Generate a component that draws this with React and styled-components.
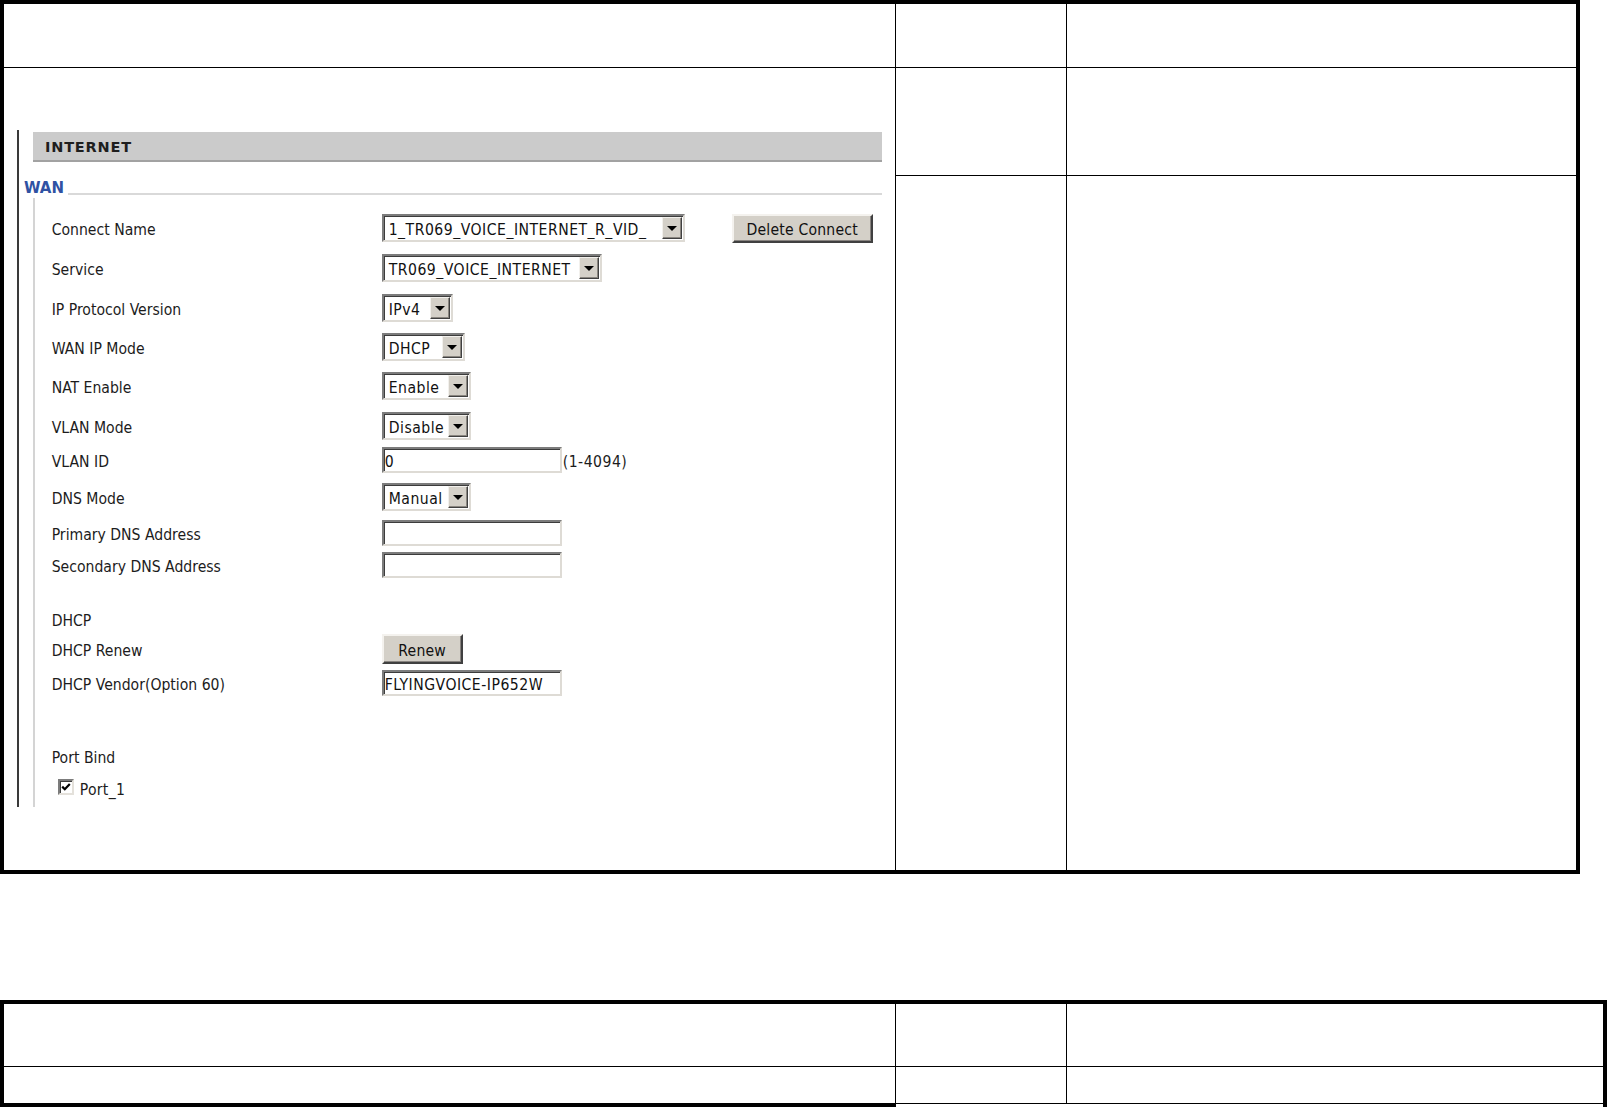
import React from "react";
import styled, { createGlobalStyle } from "styled-components";

const Global = createGlobalStyle`
  html, body {
    margin: 0;
    padding: 0;
    background: #ffffff;
  }
  body {
    font-family: "DejaVu Sans Condensed", "DejaVu Sans", sans-serif;
    font-stretch: condensed;
  }
`;

const Page = styled.div`
  width: 1608px;
  display: flex;
  flex-direction: column;
`;

const DocTable = styled.div`
  display: grid;
  width: ${p => p.$width}px;
  grid-template-columns: 892px 171px 1fr;
  grid-template-rows: ${p => p.$rows};
  border: 4px solid #000;
  border-bottom-width: ${p => (p.$openBottom ? 0 : 4)}px;
  margin-top: ${p => p.$top || 0}px;
  box-sizing: border-box;
`;

const Cell = styled.div`
  box-sizing: border-box;
  border-right: ${p => (p.$last ? 0 : 1)}px solid #000;
  border-bottom: ${p => p.$bottom || 0}px solid #000;
  grid-row: span ${p => p.$span || 1};
  ${p => (p.$height ? `height: ${p.$height}px; align-self: start;` : "")}
`;

/* ---- embedded router page ---- */

const Shot = styled.div`
  margin: 62px 0 0 13px;
  width: 865px;
  height: 677px;
  box-sizing: border-box;
  border-left: 2px solid #3a3a3a;
  display: flex;
  flex-direction: column;
`;

const TitleBar = styled.div`
  margin: 2px 0 0 14px;
  height: 30px;
  box-sizing: border-box;
  background: #cbcbcb;
  border-bottom: 2px solid #a2a2a2;
  padding: 2px 0 0 12px;
  display: flex;
  align-items: center;
  font-family: "DejaVu Sans", sans-serif;
  font-stretch: normal;
  font-weight: bold;
  font-size: 14.5px;
  letter-spacing: 0.8px;
  color: #1e1e1e;
`;

const Legend = styled.div`
  height: 33px;
  display: flex;
  align-items: flex-end;
  padding-left: 5px;
`;

const LegendText = styled.span`
  font-family: "DejaVu Sans", sans-serif;
  font-stretch: normal;
  font-weight: bold;
  font-size: 15px;
  line-height: 1;
  margin-bottom: -1px;
  color: #2f52a3;
`;

const LegendRule = styled.div`
  flex: 1;
  height: 2px;
  margin-left: 4px;
  background: #d9d9d9;
`;

const FieldBody = styled.div`
  margin: 3px 0 0 14px;
  border-left: 2px solid #d4d4d4;
  padding: 10px 0 3px 16.7px;
  display: flex;
  flex-direction: column;
`;

const Row = styled.div`
  display: grid;
  grid-template-columns: 330px auto;
  align-items: center;
  height: ${p => p.$h}px;
  margin-top: ${p => p.$gap || 0}px;
`;

const Label = styled.span`
  padding-top: 4px;
  font-size: 15.6px;
  color: #1c1c1c;
  white-space: nowrap;
`;

const Controls = styled.div`
  display: flex;
  align-items: center;
`;

const SelectBox = styled.div`
  width: ${p => p.$w}px;
  height: 28px;
  box-sizing: border-box;
  display: flex;
  align-items: stretch;
  padding: 1px 1px 1px 0;
  background: #fff;
  border: 2px solid;
  border-color: #7c7c7c #dedbd5 #dedbd5 #7c7c7c;
  box-shadow: inset 1px 1px 0 #3c3c3c;
`;

const SelectText = styled.span`
  flex: 1;
  display: flex;
  align-items: center;
  padding: 3px 0 0 5px;
  font-size: 15.6px;
  letter-spacing: 0.5px;
  color: #111;
  white-space: nowrap;
  overflow: hidden;
`;

const ArrowBtn = styled.span`
  width: 20px;
  box-sizing: border-box;
  background: #d4d0c8;
  border: 1px solid;
  border-color: #f2f0ec #404040 #404040 #f2f0ec;
  box-shadow: inset -1px -1px 0 #8a8680;
  display: flex;
  align-items: center;
  justify-content: center;

  &::after {
    content: "";
    margin-top: 1px;
    border-left: 5px solid transparent;
    border-right: 5px solid transparent;
    border-top: 5px solid #000;
  }
`;

const TextField = styled.input`
  width: 180px;
  height: 26px;
  box-sizing: border-box;
  margin: 0;
  padding: 3px 1px 0;
  border: 2px solid;
  border-color: #7c7c7c #dedbd5 #dedbd5 #7c7c7c;
  box-shadow: inset 1px 1px 0 #3c3c3c;
  background: #fff;
  font-family: inherit;
  font-stretch: condensed;
  font-size: 15.6px;
  letter-spacing: 0.5px;
  color: #111;
  outline: none;
`;

const Hint = styled.span`
  margin-left: 1px;
  padding-top: 3px;
  font-size: 15.6px;
  letter-spacing: 0.5px;
  color: #1c1c1c;
`;

const WinButton = styled.button`
  width: ${p => p.$w}px;
  height: ${p => p.$h}px;
  margin: 0 0 0 ${p => p.$ml || 0}px;
  padding: 3px 0 0;
  box-sizing: border-box;
  background: #d4d0c8;
  border: 2px solid;
  border-color: #f4f2ee #404040 #404040 #f4f2ee;
  box-shadow: inset -1px -1px 0 #888480;
  font-family: inherit;
  font-stretch: condensed;
  font-size: 15.6px;
  letter-spacing: 0.2px;
  color: #111;
`;

const CheckLine = styled.label`
  display: flex;
  align-items: center;
  padding: 3px 0 0 6px;
  font-size: 15.6px;
  letter-spacing: 0.3px;
  color: #1c1c1c;
`;

const CheckBox = styled.span`
  width: 16px;
  height: 16px;
  box-sizing: border-box;
  margin: 0 6px 6px 0;
  background: #fff;
  border: 2px solid;
  border-color: #7c7c7c #e4e1db #e4e1db #7c7c7c;
  box-shadow: inset 1px 1px 0 #3c3c3c;
  display: flex;
  align-items: center;
  justify-content: center;
`;

const Select = ({ w, value }) => (
  <SelectBox $w={w}>
    <SelectText>{value}</SelectText>
    <ArrowBtn />
  </SelectBox>
);

const rows = [
  { h: 40, label: "Connect Name", select: ["1_TR069_VOICE_INTERNET_R_VID_", 303], button: "Delete Connect" },
  { h: 40, label: "Service", select: ["TR069_VOICE_INTERNET", 220] },
  { h: 40, label: "IP Protocol Version", select: ["IPv4", 71] },
  { h: 38, label: "WAN IP Mode", select: ["DHCP", 83] },
  { h: 40, label: "NAT Enable", select: ["Enable", 89] },
  { h: 40, label: "VLAN Mode", select: ["Disable", 89] },
  { h: 28, label: "VLAN ID", input: "0", hint: "(1-4094)" },
  { h: 46, label: "DNS Mode", select: ["Manual", 89] },
  { h: 25, label: "Primary DNS Address", input: "" },
  { h: 40, label: "Secondary DNS Address", input: "" },
  { h: 26, gap: 21, label: "DHCP" },
  { h: 34, label: "DHCP Renew", renew: true },
  { h: 34, label: "DHCP Vendor(Option 60)", input: "FLYINGVOICE-IP652W" },
  { h: 32, gap: 40, label: "Port Bind" },
];

const RouterShot = () => (
  <Shot>
    <TitleBar>INTERNET</TitleBar>
    <Legend>
      <LegendText>WAN</LegendText>
      <LegendRule />
    </Legend>
    <FieldBody>
      {rows.map(r => (
        <Row key={r.label} $h={r.h} $gap={r.gap}>
          <Label>{r.label}</Label>
          <Controls>
            {r.select && <Select value={r.select[0]} w={r.select[1]} />}
            {r.input !== undefined && <TextField readOnly defaultValue={r.input} />}
            {r.hint && <Hint>{r.hint}</Hint>}
            {r.renew && <WinButton $w={81} $h={30}>Renew</WinButton>}
            {r.button && <WinButton $w={141} $h={29} $ml={47}>{r.button}</WinButton>}
          </Controls>
        </Row>
      ))}
      <Row $h={32}>
        <CheckLine>
          <CheckBox>
            <svg width="10" height="10" viewBox="0 0 10 10">
              <path d="M1.2 4.6 L3.8 7.2 L8.8 2" fill="none" stroke="#000" strokeWidth="2.2" />
            </svg>
          </CheckBox>
          Port_1
        </CheckLine>
      </Row>
    </FieldBody>
  </Shot>
);

export default function App() {
  return (
    <Page>
      <Global />
      <DocTable $width={1580} $rows="64px 108px 694px">
        <Cell $bottom={1} />
        <Cell $bottom={1} />
        <Cell $bottom={1} $last />
        <Cell $span={2}>
          <RouterShot />
        </Cell>
        <Cell $bottom={1} />
        <Cell $bottom={1} $last />
        <Cell />
        <Cell $last />
      </DocTable>
      <DocTable $width={1607} $rows="63px 40px" $top={126} $openBottom>
        <Cell $bottom={1} />
        <Cell $bottom={1} />
        <Cell $bottom={1} $last />
        <Cell $bottom={4} />
        <Cell $bottom={1} $height={37} />
        <Cell $bottom={1} $height={37} $last />
      </DocTable>
    </Page>
  );
}
